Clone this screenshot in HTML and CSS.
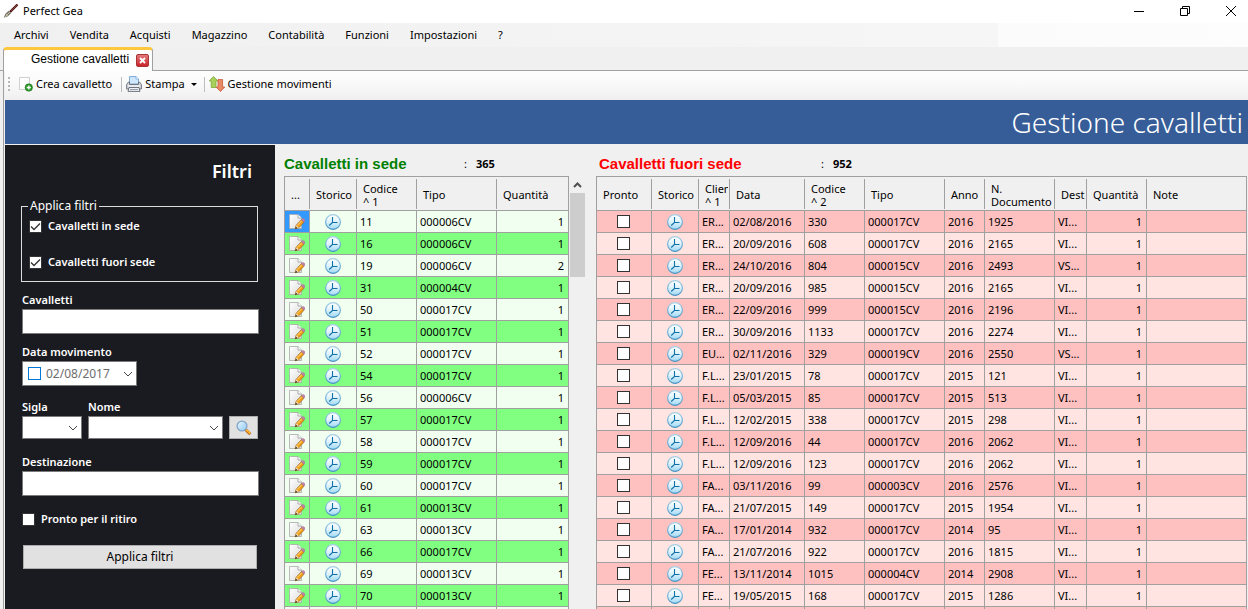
FILE: index.html
```html
<!DOCTYPE html>
<html lang="it">
<head>
<meta charset="utf-8">
<title>Perfect Gea</title>
<link rel="stylesheet" href="styles.css">
</head>
<body>
<svg class="sprite" aria-hidden="true">
  <defs>
    <linearGradient id="clockFill" x1="0" y1="0" x2="0" y2="1"><stop offset="0" stop-color="#ffffff"/><stop offset=".45" stop-color="#e2f4fd"/><stop offset="1" stop-color="#9ed8f5"/></linearGradient>
    <linearGradient id="clockRing" x1="0" y1="0" x2="0" y2="1"><stop offset="0" stop-color="#a4cfe6"/><stop offset="1" stop-color="#3f8fc0"/></linearGradient>
    <linearGradient id="paper" x1="0" y1="0" x2="1" y2="1"><stop offset="0" stop-color="#ffffff"/><stop offset="1" stop-color="#dcdcdc"/></linearGradient>
    <linearGradient id="lens" x1="0" y1="0" x2="1" y2="1"><stop offset="0" stop-color="#eef8ff"/><stop offset="1" stop-color="#8cc8f2"/></linearGradient>
  </defs>
  <symbol id="clock" viewBox="0 0 16 16">
    <circle cx="8" cy="8" r="7.4" fill="url(#clockFill)" stroke="url(#clockRing)" stroke-width="1.1"/>
    <path d="M7.500 3V8.500H12.500M7.500 8.500L4.200 11.500" fill="none" stroke="#1272a8" stroke-width="1.1"/>
  </symbol>
  <symbol id="edit" viewBox="0 0 16 16">
    <path d="M.5.5H9L12.5 4V14.5H.5Z" fill="url(#paper)" stroke="#a9a9a9" stroke-width=".8"/>
    <path d="M9 .5V4H12.5" fill="#fff" stroke="#999" stroke-width=".8"/>
    <path d="M6.2 14.8L7.2 11.2L12.4 5.7L15 8.2L9.8 13.7Z" fill="#f5a11c" stroke="#9a5d12" stroke-width=".7"/>
    <path d="M8.3 11.3L13 6.6" stroke="#ffe08a" stroke-width=".9"/>
    <path d="M12.4 5.7L13.600 4.600Q15 4.400 15.700 5.600L16 7.200L15 8.200Z" fill="#c77fae" stroke="#8f6f86" stroke-width=".4"/>
    <path d="M6.500 14.600L7.500 11.200L9.800 13.500Z" fill="#f3dcb0"/><path d="M6.200 14.900L6.900 12.800L8.300 14.100Z" fill="#222"/>
  </symbol>
</svg>

<header class="titlebar">
  <svg class="brush" viewBox="0 0 16 16" aria-hidden="true"><path d="M7 9L14.5 1.5" stroke="#4a1212" stroke-width="2.4"/><path d="M8 8L14 2" stroke="#b96a6a" stroke-width=".6"/><path d="M.8 14.8L2.4 10.8L5.8 7.8L8.2 10L5 13.2Z" fill="#777266"/><path d="M1.8 14L7 9M3 11L5 12.6" stroke="#d8d2bd" stroke-width=".8"/></svg>
  <h1 class="app-name">Perfect Gea</h1>
  <div class="window-buttons">
    <button class="window-button" type="button" aria-label="Riduci a icona"><svg viewBox="0 0 12 12"><path d="M1 6.5H11"/></svg></button>
    <button class="window-button" type="button" aria-label="Ripristina"><svg viewBox="0 0 12 12"><path d="M1.500 3.500H8.500V10.500H1.500ZM3.500 3.500V1.500H10.500V8.500H8.500"/></svg></button>
    <button class="window-button" type="button" aria-label="Chiudi"><svg viewBox="0 0 12 12"><path d="M1 1L11 11M11 1L1 11"/></svg></button>
  </div>
</header>

<nav class="menubar">
  <button type="button">Archivi</button><button type="button">Vendita</button><button type="button">Acquisti</button><button type="button">Magazzino</button><button type="button">Contabilità</button><button type="button">Funzioni</button><button type="button">Impostazioni</button><button type="button">?</button>
</nav>

<div class="tabs">
  <div class="tab">
    <span class="tab-name">Gestione cavalletti</span>
    <button class="tab-close" type="button" aria-label="Chiudi scheda"><svg viewBox="0 0 11 11"><path d="M3 3L8 8M8 3L3 8" stroke="#fff" stroke-width="1.8"/></svg></button>
  </div>
</div>

<div class="page">
  <div class="toolbar">
    <span class="grip"></span>
    <button class="tool" type="button"><svg class="icon-new" viewBox="0 0 14 16" aria-hidden="true"><path d="M.5 1.500H10.500V13.500H.5Z" fill="#fdfdfd" stroke="#d0d0d0"/><circle cx="9.800" cy="11.500" r="3.700" fill="#2b9a2b" stroke="#1d6e1d" stroke-width=".6"/><path d="M9.800 9.500V13.500M7.800 11.500H11.800" stroke="#fff" stroke-width="1.300"/></svg>Crea cavalletto</button>
    <span class="divider"></span>
    <button class="tool tool-print" type="button"><svg class="icon-tool" viewBox="0 0 16 16" aria-hidden="true"><path d="M3.500 8V.6H10L12.500 3V8Z" fill="#cfe6fb" stroke="#6fa3d4" stroke-width=".9"/><path d="M10 .6V3H12.500" fill="#fff" stroke="#6fa3d4" stroke-width=".7"/><path d="M.6 13V8.500L2.500 6H3.500V8.500H12.500V6H13.500L15.400 8.500V13Z" fill="#d3d5da" stroke="#666b75" stroke-width=".9"/><path d="M2 10H14" stroke="#fff"/><path d="M3 11.500H13L14 15.400H2Z" fill="#eef1f5" stroke="#636872" stroke-width=".9"/><path d="M4 13.500H12" stroke="#9aa0aa"/></svg>Stampa<span class="caret"></span></button>
    <span class="divider"></span>
    <button class="tool" type="button"><svg class="icon-tool" viewBox="0 0 16 16" aria-hidden="true"><path d="M4.500.5L9 5H7V11.500H2.200V5H.2Z" fill="#a8d05a" stroke="#7fa93a" stroke-width=".8"/><path d="M11.500 15.500L7 11H9V3.500H13.600V11H15.800Z" fill="#e98a66" stroke="#c55c3c" stroke-width=".8"/></svg>Gestione movimenti</button>
  </div>

  <h2 class="banner">Gestione cavalletti</h2>

  <main class="workspace">
    <form class="sidebar">
      <h3 class="sidebar-title">Filtri</h3>
      <fieldset class="group">
        <legend>Applica filtri</legend>
        <label class="check"><input type="checkbox" checked>Cavalletti in sede</label>
        <label class="check"><input type="checkbox" checked>Cavalletti fuori sede</label>
      </fieldset>
      <label class="caption" for="cavalletti">Cavalletti</label>
      <input class="textbox" id="cavalletti" type="text">
      <label class="caption" for="data">Data movimento</label>
      <div class="date">
        <input class="date-check" type="checkbox" aria-label="Usa data movimento">
        <input class="date-value" id="data" type="text" value="02/08/2017">
        <button class="date-open" type="button" aria-label="Apri calendario"><svg viewBox="0 0 10 6"><path d="M1 1L5 5L9 1"/></svg></button>
      </div>
      <div class="customer">
        <div class="customer-code"><label class="caption" for="sigla">Sigla</label><select class="dropdown" id="sigla"><option></option></select></div>
        <div class="customer-name"><label class="caption" for="nome">Nome</label><select class="dropdown" id="nome"><option></option></select></div>
        <button class="search" type="button" aria-label="Cerca"><svg viewBox="0 0 16 16"><path d="M9.500 9.500L14.300 14.300" stroke="#b5651d" stroke-width="3"/><path d="M10 9.700L14.300 13.600" stroke="#ffb52e" stroke-width="1.600"/><circle cx="6" cy="6" r="4.900" fill="url(#lens)" stroke="#84a5c8" stroke-width="1.300"/></svg></button>
      </div>
      <label class="caption" for="destinazione">Destinazione</label>
      <input class="textbox" id="destinazione" type="text">
      <label class="check check-ready"><input type="checkbox">Pronto per il ritiro</label>
      <button class="apply" type="button">Applica filtri</button>
    </form>

    <section class="panel panel-in">
      <div class="panel-head"><h3>Cavalletti in sede</h3><span>:</span><strong>365</strong></div>
      <div class="panel-body">
        <table class="grid grid-in">
          <colgroup><col class="w25"><col class="w47"><col class="w60"><col class="w80"><col class="w72"></colgroup>
          <thead><tr><th>...</th><th>Storico</th><th>Codice<br>^ 1</th><th>Tipo</th><th>Quantità</th></tr></thead>
          <tbody id="rows-in"></tbody>
        </table>
        <div class="scrollbar" aria-hidden="true"><svg viewBox="0 0 9 6"><path d="M1 5L4.500 1.500L8 5"/></svg><div class="thumb"></div></div>
      </div>
    </section>

    <section class="panel panel-out">
      <div class="panel-head"><h3>Cavalletti fuori sede</h3><span>:</span><strong>952</strong></div>
      <table class="grid grid-out">
        <colgroup><col class="w55"><col class="w47"><col class="w31"><col class="w75"><col class="w60"><col class="w80"><col class="w40"><col class="w70"><col class="w32"><col class="w60"><col></colgroup>
        <thead><tr><th>Pronto</th><th>Storico</th><th><div class="clip">Clien<br>^ 1</div></th><th>Data</th><th>Codice<br>^ 2</th><th>Tipo</th><th>Anno</th><th>N.<br>Documento</th><th>Dest</th><th>Quantità</th><th>Note</th></tr></thead>
        <tbody id="rows-out"></tbody>
      </table>
    </section>
  </main>
</div>
<script src="app.js"></script>
</body>
</html>
```

FILE: styles.css
```css
* { box-sizing: border-box; }

body {
  margin: 0;
  height: 100vh;
  display: flex;
  flex-direction: column;
  overflow: hidden;
  background: #f0f0f0;
  color: #000;
  font: 11px/16px "Noto Sans", "Open Sans", sans-serif;
}

h1, h2, h3 { margin: 0; font-size: inherit; font-weight: normal; }
button { font: inherit; color: inherit; border: 0; padding: 0; background: none; }
.sprite { position: absolute; width: 0; height: 0; }

.titlebar { display: flex; align-items: center; height: 23px; flex: none; background: #fff; padding: 0 0 2px 3px; }
.brush { width: 16px; height: 16px; margin-right: 4px; }
.window-buttons { margin-left: auto; display: flex; }
.window-button { width: 46px; height: 21px; display: grid; place-items: center; }
.window-button:last-child { width: 34px; margin-left: 6px; }
.window-button svg { width: 12px; height: 12px; fill: none; stroke: #000; }

.menubar {
  display: flex;
  flex: none;
  height: 24px;
  padding-left: 14px;
  gap: 21px;
  background: linear-gradient(90deg, #f0f0f0, #f6f6f6 80%, #fbfbfb 80%, #fdfdfd);
}

.tabs { display: flex; flex: none; height: 24px; padding-left: 3px; border-bottom: 1px solid #a0a0a0; }
.tab {
  display: flex;
  justify-content: space-between;
  width: 150px;
  height: 24px;
  padding: 1px 3px 0 27px;
  background: #fff;
  border: 1px solid #a0a0a0;
  border-width: 3px 1px 0 1px;
  border-top-color: #ffc83c;
  border-radius: 4px 4px 0 0;
}
.tab-name { font: 12px/16px "Liberation Sans", Arial, sans-serif; white-space: nowrap; }
.tab-close { flex: none; width: 13px; height: 13px; margin-top: 3px; background: linear-gradient(#e2787a, #c9252b); border: 1px solid #a33; border-radius: 2px; }
.tab-close svg { display: block; width: 11px; height: 11px; }

.page { flex: 1; min-height: 0; display: flex; flex-direction: column; margin-left: 3px; border-left: 1px solid #a0a0a0; padding-left: 1px; }

.toolbar { display: flex; align-items: center; flex: none; height: 29px; padding: 0 3px 3px; background: linear-gradient(#fdfdfd, #fafafa 40%, #efefef); }
.grip { width: 2px; height: 14px; margin-right: 9px; background: repeating-linear-gradient(#b8b8b8 0 2px, transparent 2px 4px); }
.tool { display: flex; align-items: center; height: 22px; white-space: nowrap; }
.icon-new { width: 14px; height: 16px; margin-right: 3px; }
.icon-tool { width: 16px; height: 16px; margin-right: 3px; }
.divider { width: 1px; height: 15px; margin: 0 4px 0 9px; background: #bdbdbd; }
.tool-print + .divider { margin-left: 7px; }
.caret { margin-left: 6px; border: 3px solid transparent; border-top-color: #000; border-bottom: 0; }

.banner { flex: none; height: 44px; padding-right: 5px; background: #365d98; color: #fff; text-align: right; font-size: 28px; line-height: 44px; font-weight: 300; }

.workspace { flex: 1; min-height: 0; display: flex; margin-top: 1px; overflow: hidden; }

.sidebar { flex: none; width: 270px; padding: 14px 16px 0 17px; background: #1a1b20; color: #fff; }
.sidebar-title { padding-right: 7px; text-align: right; font-size: 18px; line-height: 24px; font-weight: 600; }
.group { margin: 15px 1px 0 -1px; padding: 4px 7px 11px; border: 1px solid #dcdcdc; display: flex; flex-direction: column; gap: 20px; }
.group legend { padding: 0 2px; margin-left: -1px; font-size: 12px; line-height: 16px; }
.check { display: flex; align-items: center; gap: 6px; height: 16px; font-weight: 600; }
.check-ready { margin-top: 15px; }
.caption { display: block; margin: 10px 0 1px; font-weight: 600; }
.customer + .caption { margin-top: 15px; }

input[type="checkbox"] { appearance: none; flex: none; width: 13px; height: 13px; margin: 0; border: 1px solid #333; background: #fff; }
input[type="checkbox"]:checked {
  background: #fff url("data:image/svg+xml,%3Csvg xmlns='http://www.w3.org/2000/svg' width='11' height='11'%3E%3Cpath d='M1 5.500L4 8.500L10 2.500' fill='none' stroke='%23333' stroke-width='1.300'/%3E%3C/svg%3E") no-repeat center;
}

.textbox, .dropdown, .date { display: block; width: 100%; border: 1px solid #7a7a7a; background: #fff; border-radius: 0; }
.textbox { height: 25px; padding: 0 4px; }
.date { display: flex; align-items: center; width: 115px; height: 25px; padding: 0 3px 0 5px; }
input.date-check { border-color: #0078d7; }
.date-value { flex: 1; min-width: 0; border: 0; padding: 0 0 0 5px; color: #6d6d6d; background: none; font: 12px/16px "Noto Sans", sans-serif; }
.date-open svg { display: block; width: 10px; height: 6px; fill: none; stroke: #444; }
.customer { display: flex; align-items: flex-end; gap: 6px; margin: 13px 1px 0 0; }
.customer .caption { margin-top: 0; }
.customer-code { width: 60px; }
.customer-name { flex: 1; }
.dropdown {
  appearance: none;
  height: 23px;
  background: #fff url("data:image/svg+xml,%3Csvg xmlns='http://www.w3.org/2000/svg' width='10' height='6'%3E%3Cpath d='M1 1L5 5L9 1' fill='none' stroke='%23444'/%3E%3C/svg%3E") no-repeat right 3px center;
}
.search { display: grid; place-items: center; width: 29px; height: 23px; background: #e1e1e1; border: 1px solid #adadad; }
.search svg { width: 16px; height: 16px; }
.apply { display: block; width: calc(100% - 3px); height: 24px; margin: 18px 2px 0 1px; background: #e1e1e1; border: 1px solid #adadad; color: #000; font-size: 12px; }

.panel-in { flex: none; margin-left: 9px; }
.panel-out { flex: 1; min-width: 0; margin-left: 10px; padding-right: 1px; }
.panel-head { display: grid; grid-template-columns: 180px 12px auto; align-items: center; height: 31px; padding-top: 6px; }
.panel-head h3 { font: bold 15px/18px "Liberation Sans", Arial, sans-serif; color: #008000; }
.panel-out .panel-head { grid-template-columns: 222px 12px auto; padding-left: 3px; }
.panel-out .panel-head h3 { color: #f00; }
.panel-body { display: flex; }

.grid { table-layout: fixed; border-collapse: separate; border-spacing: 0; border: solid #a0a0a0; border-width: 1px 0 0 1px; line-height: 13px; }
.grid-in { width: 285px; }
.grid-out { width: 100%; }
.grid th {
  height: 34px;
  padding: 2px 0 0 6px;
  text-align: left;
  font-weight: normal;
  white-space: nowrap;
  overflow: hidden;
  border-bottom: 1px solid #a0a0a0;
  background: linear-gradient(#a0a0a0, #a0a0a0) right center / 1px 30px no-repeat;
}
.grid th:last-child { border-right: 1px solid #a0a0a0; background: none; }
.clip { overflow: hidden; margin-right: 2px; }
.grid td { height: 22px; padding: 0 1px 0 3px; border: solid #a0a0a0; border-width: 0 1px 1px 0; white-space: nowrap; overflow: hidden; text-overflow: ellipsis; }
.grid td.mid { padding: 0 1px 0 0; }
.grid td.num { text-align: right; padding-right: 4px; }
.grid svg, .grid input { display: block; margin: 0 auto; }
.grid svg { width: 16px; height: 16px; }
.grid-in td { background: #f0fff0; }
.grid-in tr:nth-child(even) td { background: #80ff80; }
.grid-in tbody tr:first-child td:first-child { background: #3399ff; }
.grid-out td { background: #ffc0c0; }
.grid-out tr:nth-child(even) td { background: #ffe4e1; }

.w25 { width: 25px; } .w31 { width: 31px; } .w32 { width: 32px; } .w40 { width: 40px; }
.w47 { width: 47px; } .w55 { width: 55px; } .w60 { width: 60px; } .w70 { width: 70px; }
.w72 { width: 72px; } .w75 { width: 75px; } .w80 { width: 80px; }

.scrollbar { width: 17px; padding: 0 1px; }
.scrollbar svg { display: block; width: 9px; height: 6px; margin: 6px auto 5px; fill: none; stroke: #505050; stroke-width: 2; }
.thumb { height: 84px; background: #cdcdcd; }
```

FILE: app.js
```js
const inside = `11 000006CV 1
16 000006CV 1
19 000006CV 2
31 000004CV 1
50 000017CV 1
51 000017CV 1
52 000017CV 1
54 000017CV 1
56 000006CV 1
57 000017CV 1
58 000017CV 1
59 000017CV 1
60 000017CV 1
61 000013CV 1
63 000013CV 1
66 000017CV 1
69 000013CV 1
70 000013CV 1`;

const outside = `ER... 02/08/2016 330 000017CV 2016 1925 VI...
ER... 20/09/2016 608 000017CV 2016 2165 VI...
ER... 24/10/2016 804 000015CV 2016 2493 VS...
ER... 20/09/2016 985 000015CV 2016 2165 VI...
ER... 22/09/2016 999 000015CV 2016 2196 VI...
ER... 30/09/2016 1133 000017CV 2016 2274 VI...
EU... 02/11/2016 329 000019CV 2016 2550 VS...
F.L... 23/01/2015 78 000017CV 2015 121 VI...
F.L... 05/03/2015 85 000017CV 2015 513 VI...
F.L... 12/02/2015 338 000017CV 2015 298 VI...
F.L... 12/09/2016 44 000017CV 2016 2062 VI...
F.L... 12/09/2016 123 000017CV 2016 2062 VI...
FA... 03/11/2016 99 000003CV 2016 2576 VI...
FA... 21/07/2015 149 000017CV 2015 1954 VI...
FA... 17/01/2014 932 000017CV 2014 95 VI...
FA... 21/07/2016 922 000017CV 2016 1815 VI...
FE... 13/11/2014 1015 000004CV 2014 2908 VI...
FE... 19/05/2015 168 000017CV 2015 1286 VI...`;

const icon = (name) => `<td class="mid"><svg aria-hidden="true"><use href="#${name}"/></svg></td>`;
const split = (text) => text.split("\n").map((line) => line.split(" "));
const cells = (values) => values.map((v) => `<td>${v}</td>`).join("");

document.getElementById("rows-in").innerHTML = [...split(inside), null]
  .map((row) => row
    ? `<tr>${icon("edit")}${icon("clock")}${cells(row.slice(0, 2))}<td class="num">${row[2]}</td></tr>`
    : `<tr>${"<td></td>".repeat(5)}</tr>`)
  .join("");

document.getElementById("rows-out").innerHTML = [...split(outside), null]
  .map((row) => row
    ? `<tr><td class="mid"><input type="checkbox" aria-label="Pronto ${row[2]}"></td>${icon("clock")}${cells(row)}<td class="num">1</td><td></td></tr>`
    : `<tr>${"<td></td>".repeat(11)}</tr>`)
  .join("");
```
